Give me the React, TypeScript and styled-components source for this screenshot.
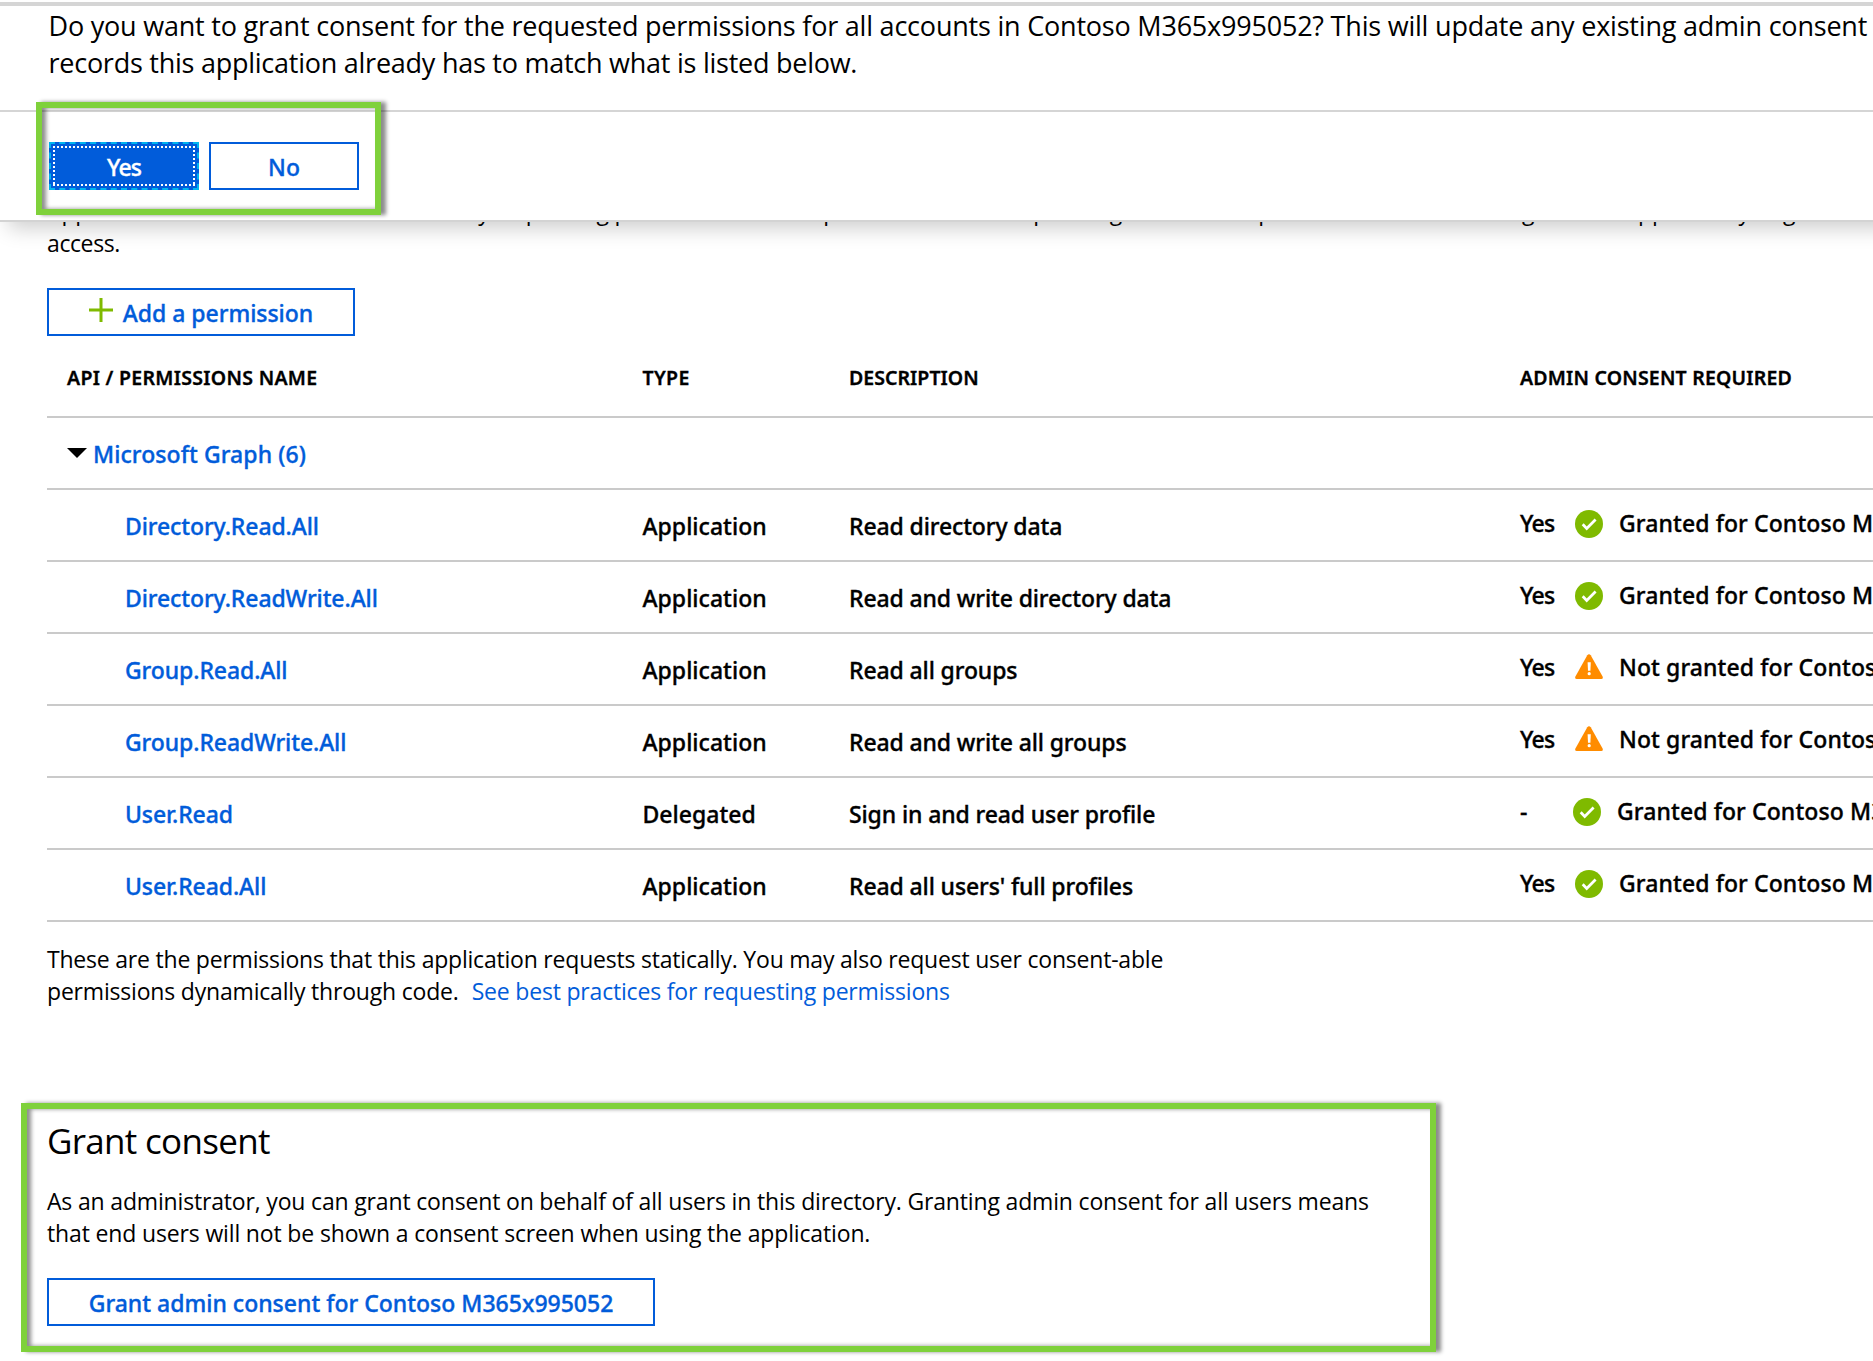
import React from 'react';
import styled, { createGlobalStyle, css } from 'styled-components';

const BLUE = '#015cda';
const GREEN = '#7fba00';
const HIGHLIGHT = '#7fd13b';

const GlobalStyle = createGlobalStyle`
  * { box-sizing: border-box; }
  body { margin: 0; background: #fff; color: #000; overflow: hidden; }
`;

const Page = styled.div`
  position: relative;
  width: 1873px;
  height: 1361px;
  overflow: hidden;
  background: #fff;
  font: 400 23px/32px 'Open Sans', 'Noto Sans', sans-serif;
`;

/* Inline run of text with its own letter spacing. */
const Run = styled.span<{ $ls: number }>`
  letter-spacing: ${p => p.$ls}px;
  white-space: pre;
`;

/* ---------- consent dialog ---------- */
const Dialog = styled.section`
  position: absolute;
  top: 2px;
  left: 0;
  right: -30px;
  z-index: 2;
  height: 220px;
  background: #fff;
  border-top: 4px solid #d5d5d5;
  border-bottom: 2px solid #d3d3d3;
  box-shadow: 0 14px 20px -8px rgba(0, 0, 0, 0.2);
`;

const Question = styled.p`
  margin: 0;
  height: 106px;
  padding: 1px 0 0 48.5px;
  border-bottom: 2px solid #d5d5d5;
  font-size: 27px;
  line-height: 37px;
`;

const Actions = styled.div`
  display: flex;
  gap: 10px;
  padding: 30px 0 0 49px;
`;

const Highlight = css`
  border: 6px solid ${HIGHLIGHT};
  box-shadow: 5px 0 4px rgba(0, 0, 0, 0.45), inset 4px 0 4px rgba(0, 0, 0, 0.45);
`;

const ActionsHighlight = styled.div`
  ${Highlight}
  position: absolute;
  top: 96px;
  left: 36px;
  width: 345px;
  height: 113px;
  pointer-events: none;
`;

const Button = styled.button<{ $width: number; $primary?: boolean }>`
  position: relative;
  display: flex;
  align-items: center;
  justify-content: center;
  width: ${p => p.$width}px;
  height: 48px;
  padding: 2px 0 0;
  border: 2px solid ${BLUE};
  border-radius: 0;
  background: ${p => (p.$primary ? BLUE : '#fff')};
  color: ${p => (p.$primary ? '#fff' : BLUE)};
  font: 500 23px/32px 'Noto Sans', sans-serif;
  -webkit-text-stroke: 0.35px currentColor;
  ${p =>
    p.$primary &&
    css`
      border: 2px dashed #00b4f0;
      background-clip: border-box;
      &::after {
        --dots-x: repeating-linear-gradient(90deg, #fff 0 2px, transparent 2px 4px);
        --dots-y: repeating-linear-gradient(180deg, #fff 0 2px, transparent 2px 4px);
        content: '';
        position: absolute;
        inset: 2px;
        background:
          var(--dots-x) top / 100% 2px no-repeat,
          var(--dots-x) bottom / 100% 2px no-repeat,
          var(--dots-y) left / 2px 100% no-repeat,
          var(--dots-y) right / 2px 100% no-repeat;
      }
    `}
`;

/* ---------- main blade ---------- */
const Main = styled.main`
  display: flex;
  flex-direction: column;
  align-items: flex-start;
  padding: 195px 0 0 47px;
`;

const Paragraph = styled.p<{ $top?: number }>`
  margin: ${p => p.$top ?? 0}px 0 0;
  white-space: nowrap;
`;

const Spaced = styled.div`
  margin-top: 29px;
`;

const Link = styled.a`
  margin-left: 13px;
  color: ${BLUE};
`;

const PlusIcon = styled.svg`
  width: 24px;
  height: 24px;
  margin: -6px 10px 0 0;
`;

const Table = styled.div`
  width: 1826px;
`;

const Row = styled.div<{ $head?: boolean }>`
  display: grid;
  grid-template-columns: 575.5px 206.5px 671px 1fr;
  height: ${p => (p.$head ? 82 : 72)}px;
  padding: ${p => (p.$head ? '32px 0 0 20px' : '19px 0 0 20px')};
  border-bottom: 2px solid #cacaca;
  overflow: hidden;
  white-space: nowrap;
  font: ${p => (p.$head ? '600 19.5px/20px' : '500 23px/34px')} 'Noto Sans', sans-serif;
  -webkit-text-stroke: 0.35px currentColor;
`;

const GroupName = styled.div`
  display: flex;
  color: ${BLUE};
`;

const Caret = styled.svg`
  width: 20px;
  height: 10px;
  margin: 11px 6px 0 0;
`;

const PermissionName = styled.div`
  padding-left: 58px;
  color: ${BLUE};
`;

const Consent = styled.div`
  display: flex;
  margin-top: -3px;
`;

const Required = styled.span<{ $narrow: boolean }>`
  flex: none;
  width: ${p => (p.$narrow ? 53 : 55)}px;
`;

const StatusIcon = styled.svg`
  flex: none;
  width: 28px;
  height: 28px;
  margin: 4px 16px 0 0;
`;

const GrantSection = styled.section`
  ${Highlight}
  width: 1415px;
  height: 249px;
  margin: 96px 0 0 -26px;
  padding: 9px 0 0 20px;
`;

const Heading = styled.h2`
  margin: 0;
  font-size: 35px;
  font-weight: 400;
  line-height: 46px;
`;

const Granted = () => (
  <StatusIcon viewBox="0 0 28 28">
    <circle cx="14" cy="14" r="14" fill={GREEN} />
    <path d="M7.7 14.3 11.7 18.5 20.6 9.5" fill="none" stroke="#fff" strokeWidth="2.7" />
  </StatusIcon>
);

const NotGranted = () => (
  <StatusIcon viewBox="0 0 28 28">
    <path
      d="M12.3 1.2Q14-.8 15.7 1.2L27.6 22.6Q28.4 25 26.3 25H1.7Q-.4 25 .4 22.6Z"
      fill="#ff8c00"
    />
    <path d="M12.6 8.2h3.2l-.4 8.5h-2.4z" fill="#fff" />
    <circle cx="14.2" cy="19.7" r="1.6" fill="#fff" />
  </StatusIcon>
);

type Permission = {
  name: string;
  type: string;
  description: string;
  required: string;
  granted: boolean;
};

const permissions: Permission[] = [
  { name: 'Directory.Read.All', type: 'Application', description: 'Read directory data', required: 'Yes', granted: true },
  { name: 'Directory.ReadWrite.All', type: 'Application', description: 'Read and write directory data', required: 'Yes', granted: true },
  { name: 'Group.Read.All', type: 'Application', description: 'Read all groups', required: 'Yes', granted: false },
  { name: 'Group.ReadWrite.All', type: 'Application', description: 'Read and write all groups', required: 'Yes', granted: false },
  { name: 'User.Read', type: 'Delegated', description: 'Sign in and read user profile', required: '-', granted: true },
  { name: 'User.Read.All', type: 'Application', description: "Read all users' full profiles", required: 'Yes', granted: true },
];

export default function App() {
  return (
    <Page>
      <GlobalStyle />
      <Dialog>
        <Question>
          <Run $ls={-0.21}>
            Do you want to grant consent for the requested permissions for all accounts in Contoso M365x995052? This will update any existing admin consent
          </Run>
          <br />
          <Run $ls={-0.25}>records this application already has to match what is listed below.</Run>
        </Question>
        <Actions>
          <Button $width={150} $primary>
            <Run $ls={-0.9}>Yes</Run>
          </Button>
          <Button $width={150}>
            <Run $ls={0}>No</Run>
          </Button>
        </Actions>
        <ActionsHighlight />
      </Dialog>

      <Main>
        <Paragraph>
          <Run $ls={-0.16}>
            Applications are authorized to use APIs by requesting permissions. These permissions show up during the consent process where users are given the opportunity to grant/deny
          </Run>
          <br />
          <Run $ls={-0.4}>access.</Run>
        </Paragraph>
        <Spaced>
          <Button $width={308}>
            <PlusIcon viewBox="0 0 24 24">
              <path d="M12 0v24M0 12h24" stroke={GREEN} strokeWidth="3" />
            </PlusIcon>
            <Run $ls={-0.03}>Add a permission</Run>
          </Button>
        </Spaced>

        <Table>
          <Row $head>
            <Run $ls={0.3}>API / PERMISSIONS NAME</Run>
            <Run $ls={0.35}>TYPE</Run>
            <Run $ls={0.05}>DESCRIPTION</Run>
            <Run $ls={0.2}>ADMIN CONSENT REQUIRED</Run>
          </Row>
          <Row>
            <GroupName>
              <Caret viewBox="0 0 20 10">
                <path d="M0 0h20L10 10z" />
              </Caret>
              <Run $ls={0.08}>Microsoft Graph (6)</Run>
            </GroupName>
          </Row>
          {permissions.map(p => (
            <Row key={p.name}>
              <PermissionName>
                <Run $ls={-0.1}>{p.name}</Run>
              </PermissionName>
              <Run $ls={0.02}>{p.type}</Run>
              <Run $ls={-0.12}>{p.description}</Run>
              <Consent>
                <Required $narrow={p.required === '-'}>
                  <Run $ls={-0.7}>{p.required}</Run>
                </Required>
                {p.granted ? <Granted /> : <NotGranted />}
                <Run $ls={0.1}>{p.granted ? 'Granted' : 'Not granted'} for Contoso M365x995052</Run>
              </Consent>
            </Row>
          ))}
        </Table>

        <Paragraph $top={21}>
          <Run $ls={-0.21}>
            These are the permissions that this application requests statically. You may also request user consent-able
          </Run>
          <br />
          <Run $ls={-0.19}>permissions dynamically through code.</Run>
          <Link>
            <Run $ls={-0.19}>See best practices for requesting permissions</Run>
          </Link>
        </Paragraph>

        <GrantSection>
          <Heading>
            <Run $ls={-0.7}>Grant consent</Run>
          </Heading>
          <Paragraph $top={21}>
            <Run $ls={-0.17}>
              As an administrator, you can grant consent on behalf of all users in this directory. Granting admin consent for all users means
            </Run>
            <br />
            <Run $ls={-0.15}>that end users will not be shown a consent screen when using the application.</Run>
          </Paragraph>
          <Spaced>
            <Button $width={608}>
              <Run $ls={0}>Grant admin consent for Contoso M365x995052</Run>
            </Button>
          </Spaced>
        </GrantSection>
      </Main>
    </Page>
  );
}
